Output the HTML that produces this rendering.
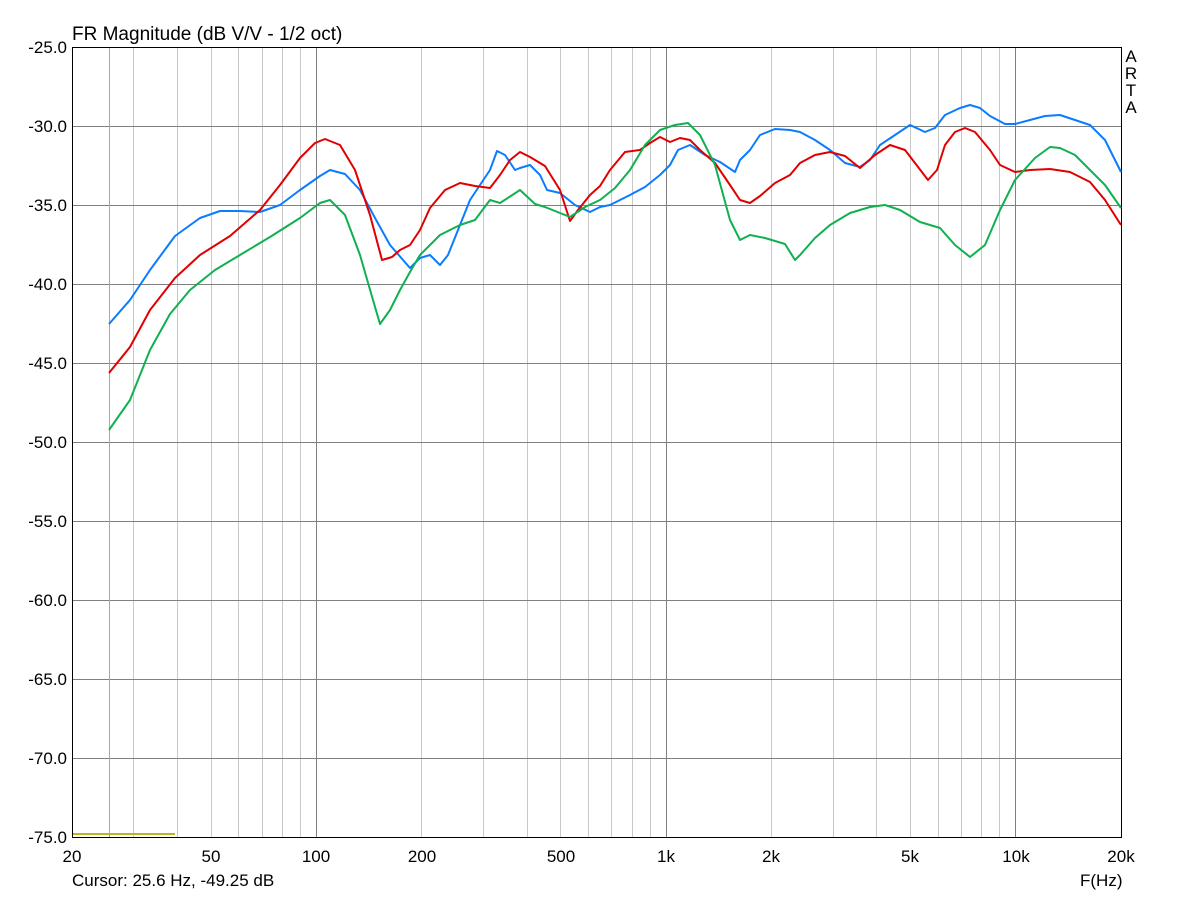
<!DOCTYPE html><html><head><style>
body{margin:0;background:#fff;width:1193px;height:894px;overflow:hidden}
svg text{font-family:"Liberation Sans",sans-serif;font-size:17px;fill:#000}
</style></head><body>
<svg width="1193" height="894" xmlns="http://www.w3.org/2000/svg">
<g stroke="#c8c8c8" stroke-width="1">
<line x1="133.5" y1="47" x2="133.5" y2="837"/><line x1="177.5" y1="47" x2="177.5" y2="837"/><line x1="211.5" y1="47" x2="211.5" y2="837"/><line x1="238.5" y1="47" x2="238.5" y2="837"/><line x1="262.5" y1="47" x2="262.5" y2="837"/><line x1="282.5" y1="47" x2="282.5" y2="837"/><line x1="300.5" y1="47" x2="300.5" y2="837"/>
<line x1="421.5" y1="47" x2="421.5" y2="837"/><line x1="483.5" y1="47" x2="483.5" y2="837"/><line x1="527.5" y1="47" x2="527.5" y2="837"/><line x1="560.5" y1="47" x2="560.5" y2="837"/><line x1="588.5" y1="47" x2="588.5" y2="837"/><line x1="611.5" y1="47" x2="611.5" y2="837"/><line x1="632.5" y1="47" x2="632.5" y2="837"/><line x1="650.5" y1="47" x2="650.5" y2="837"/>
<line x1="771.5" y1="47" x2="771.5" y2="837"/><line x1="833.5" y1="47" x2="833.5" y2="837"/><line x1="876.5" y1="47" x2="876.5" y2="837"/><line x1="910.5" y1="47" x2="910.5" y2="837"/><line x1="938.5" y1="47" x2="938.5" y2="837"/><line x1="961.5" y1="47" x2="961.5" y2="837"/><line x1="981.5" y1="47" x2="981.5" y2="837"/><line x1="999.5" y1="47" x2="999.5" y2="837"/>
</g>
<g stroke="#808080" stroke-width="1">
<line x1="316.5" y1="47" x2="316.5" y2="837"/><line x1="666.5" y1="47" x2="666.5" y2="837"/><line x1="1015.5" y1="47" x2="1015.5" y2="837"/>
<line x1="72" y1="126.5" x2="1121" y2="126.5"/><line x1="72" y1="205.5" x2="1121" y2="205.5"/><line x1="72" y1="284.5" x2="1121" y2="284.5"/><line x1="72" y1="363.5" x2="1121" y2="363.5"/><line x1="72" y1="442.5" x2="1121" y2="442.5"/><line x1="72" y1="521.5" x2="1121" y2="521.5"/><line x1="72" y1="600.5" x2="1121" y2="600.5"/><line x1="72" y1="679.5" x2="1121" y2="679.5"/><line x1="72" y1="758.5" x2="1121" y2="758.5"/>
</g>
<line x1="109.5" y1="47" x2="109.5" y2="837" stroke="#b8b820" stroke-width="1"/>
<line x1="72" y1="834" x2="175" y2="834" stroke="#b8b820" stroke-width="2"/>
<rect x="72.5" y="47.5" width="1049" height="790" fill="none" stroke="#000" stroke-width="1"/>
<g fill="none" stroke-width="2" stroke-linejoin="round">
<polyline stroke="#0a7cff" points="109,324 130,300 150,270 175,236 200,218 220,211 240,211 260,212 280,205 300,190 320,176 330,170 345,174 360,190 375,218 390,245 410,268 420,258 430,255 440,265 448,255 460,225 470,200 480,185 490,170 497,151 505,155 515,170 520,168 530,165 540,175 547,190 560,193 575,205 590,212 600,207 610,205 630,195 645,187 660,175 670,165 678,150 690,145 705,155 720,162 735,172 740,160 750,150 760,135 775,129 790,130 800,132 815,140 830,150 845,163 860,167 870,160 880,145 895,135 910,125 925,132 935,128 945,115 960,108 970,105 980,108 990,116 1005,124 1015,124 1030,120 1045,116 1060,115 1075,120 1090,125 1105,140 1121,172"/>
<polyline stroke="#e00000" points="109,373 130,347 150,310 175,278 200,255 230,236 260,210 280,185 300,158 315,143 325,139 340,145 355,170 370,215 382,260 392,257 400,250 410,245 420,230 430,208 445,190 460,183 475,186 490,188 500,175 510,160 520,152 530,157 545,166 560,190 570,221 578,210 590,195 600,186 610,170 625,152 640,150 650,143 660,137 670,142 680,138 690,140 700,150 715,163 730,185 740,200 750,203 760,196 775,183 790,175 800,163 815,155 830,152 845,156 860,168 875,155 890,145 905,150 915,163 928,180 937,170 945,145 955,132 965,128 975,132 990,150 1000,165 1015,172 1030,170 1050,169 1070,172 1090,182 1105,200 1121,225"/>
<polyline stroke="#10b050" points="109,430 130,400 150,350 170,314 190,290 215,270 240,255 270,237 300,218 320,203 330,200 345,215 360,255 373,300 380,324 390,310 400,290 410,272 420,255 440,235 460,225 475,220 490,200 500,203 520,190 535,204 545,207 560,213 570,217 585,207 600,200 615,188 630,170 645,145 660,130 675,125 688,123 700,135 715,165 730,220 740,240 750,235 765,238 785,244 795,260 800,255 815,238 830,225 850,213 870,207 885,205 900,210 920,222 940,228 955,245 970,257 985,245 1000,210 1015,180 1035,158 1050,147 1060,148 1075,155 1090,170 1105,185 1121,208"/>
</g>
<text x="72" y="40" style="font-size:19px">FR Magnitude (dB V/V - 1/2 oct)</text>
<g text-anchor="end">
<text x="67" y="53">-25.0</text><text x="67" y="132">-30.0</text><text x="67" y="211">-35.0</text><text x="67" y="290">-40.0</text><text x="67" y="369">-45.0</text><text x="67" y="448">-50.0</text><text x="67" y="527">-55.0</text><text x="67" y="606">-60.0</text><text x="67" y="685">-65.0</text><text x="67" y="764">-70.0</text><text x="67" y="843">-75.0</text>
</g>
<g text-anchor="middle">
<text x="72" y="862">20</text><text x="211" y="862">50</text><text x="316" y="862">100</text><text x="422" y="862">200</text><text x="561" y="862">500</text><text x="666" y="862">1k</text><text x="771" y="862">2k</text><text x="910" y="862">5k</text><text x="1016" y="862">10k</text><text x="1121" y="862">20k</text>
<text x="1131" y="62">A</text><text x="1131" y="79">R</text><text x="1131" y="96">T</text><text x="1131" y="113">A</text>
</g>
<text x="72" y="886">Cursor: 25.6 Hz, -49.25 dB</text>
<text x="1080" y="886">F(Hz)</text>
</svg>
</body></html>
